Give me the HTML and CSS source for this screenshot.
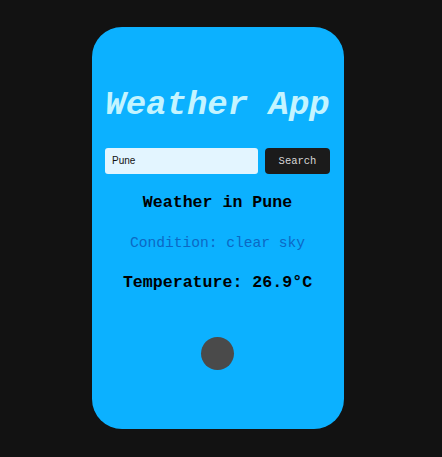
FILE: index.html
```html
<!DOCTYPE html>
<html lang="en">
<head>
  <meta charset="UTF-8">
  <meta name="viewport" content="width=device-width, initial-scale=1.0">
  <title>Weather App</title>
  <link rel="stylesheet" href="styles.css">
</head>
<body>
  <main class="wa-card">
    <h1 class="wa-title">Weather App</h1>
    <form class="wa-form">
      <input type="text" class="wa-input" value="Pune">
      <button type="button" class="wa-btn">Search</button>
    </form>
    <h2 class="wa-city">Weather in Pune</h2>
    <p class="wa-condition">Condition: clear sky</p>
    <p class="wa-temp">Temperature: 26.9°C</p>
    <div class="wa-dot"></div>
  </main>
</body>
</html>
```

FILE: styles.css
```css
/* Root resets */
* { margin: 0; padding: 0; box-sizing: border-box; }
body {
  font-family: 'Liberation Mono', 'Courier New', monospace;
  background-color: #121212;
  min-height: 100vh;
  display: flex;
  justify-content: center;
  align-items: center;
  padding-right: 6px;
  padding-bottom: 2px;
}

/* Card */
.wa-card {
  width: 252px;
  height: 402px;
  background-color: #0cb1ff;
  border-radius: 30px;
  padding: 58px 14px 0 13px;
  display: flex;
  flex-direction: column;
  align-items: center;
}

.wa-title {
  font-size: 34px;
  line-height: 40px;
  font-weight: 700;
  font-style: italic;
  color: #c4f4ff;
  white-space: nowrap;
}

/* Search form */
.wa-form { display: flex; gap: 7px; width: 100%; margin-top: 23px; }
.wa-input {
  flex: 1;
  height: 26px;
  border: none;
  border-radius: 3px;
  background-color: #e3f5ff;
  padding: 0 7px;
  font-family: 'Liberation Sans', Arial, sans-serif;
  font-size: 10px;
  color: #111;
  outline: none;
}
.wa-btn {
  width: 65px;
  height: 26px;
  border: none;
  border-radius: 4px;
  background-color: #1b1b1b;
  color: #d8d8d8;
  font-family: 'Liberation Mono', 'Courier New', monospace;
  font-size: 10.5px;
}

/* Results */
.wa-city { margin-top: 19px; font-size: 16.6px; line-height: 20px; font-weight: 700; color: #000; }
.wa-condition { margin-top: 21px; font-size: 14.6px; line-height: 18px; color: #0c68c4; }
.wa-temp { margin-top: 21px; font-size: 16.6px; line-height: 20px; font-weight: 700; color: #000; }

.wa-dot {
  margin-top: 44px;
  width: 33px;
  height: 33px;
  border-radius: 50%;
  background-color: #4a4a4a;
}
```
